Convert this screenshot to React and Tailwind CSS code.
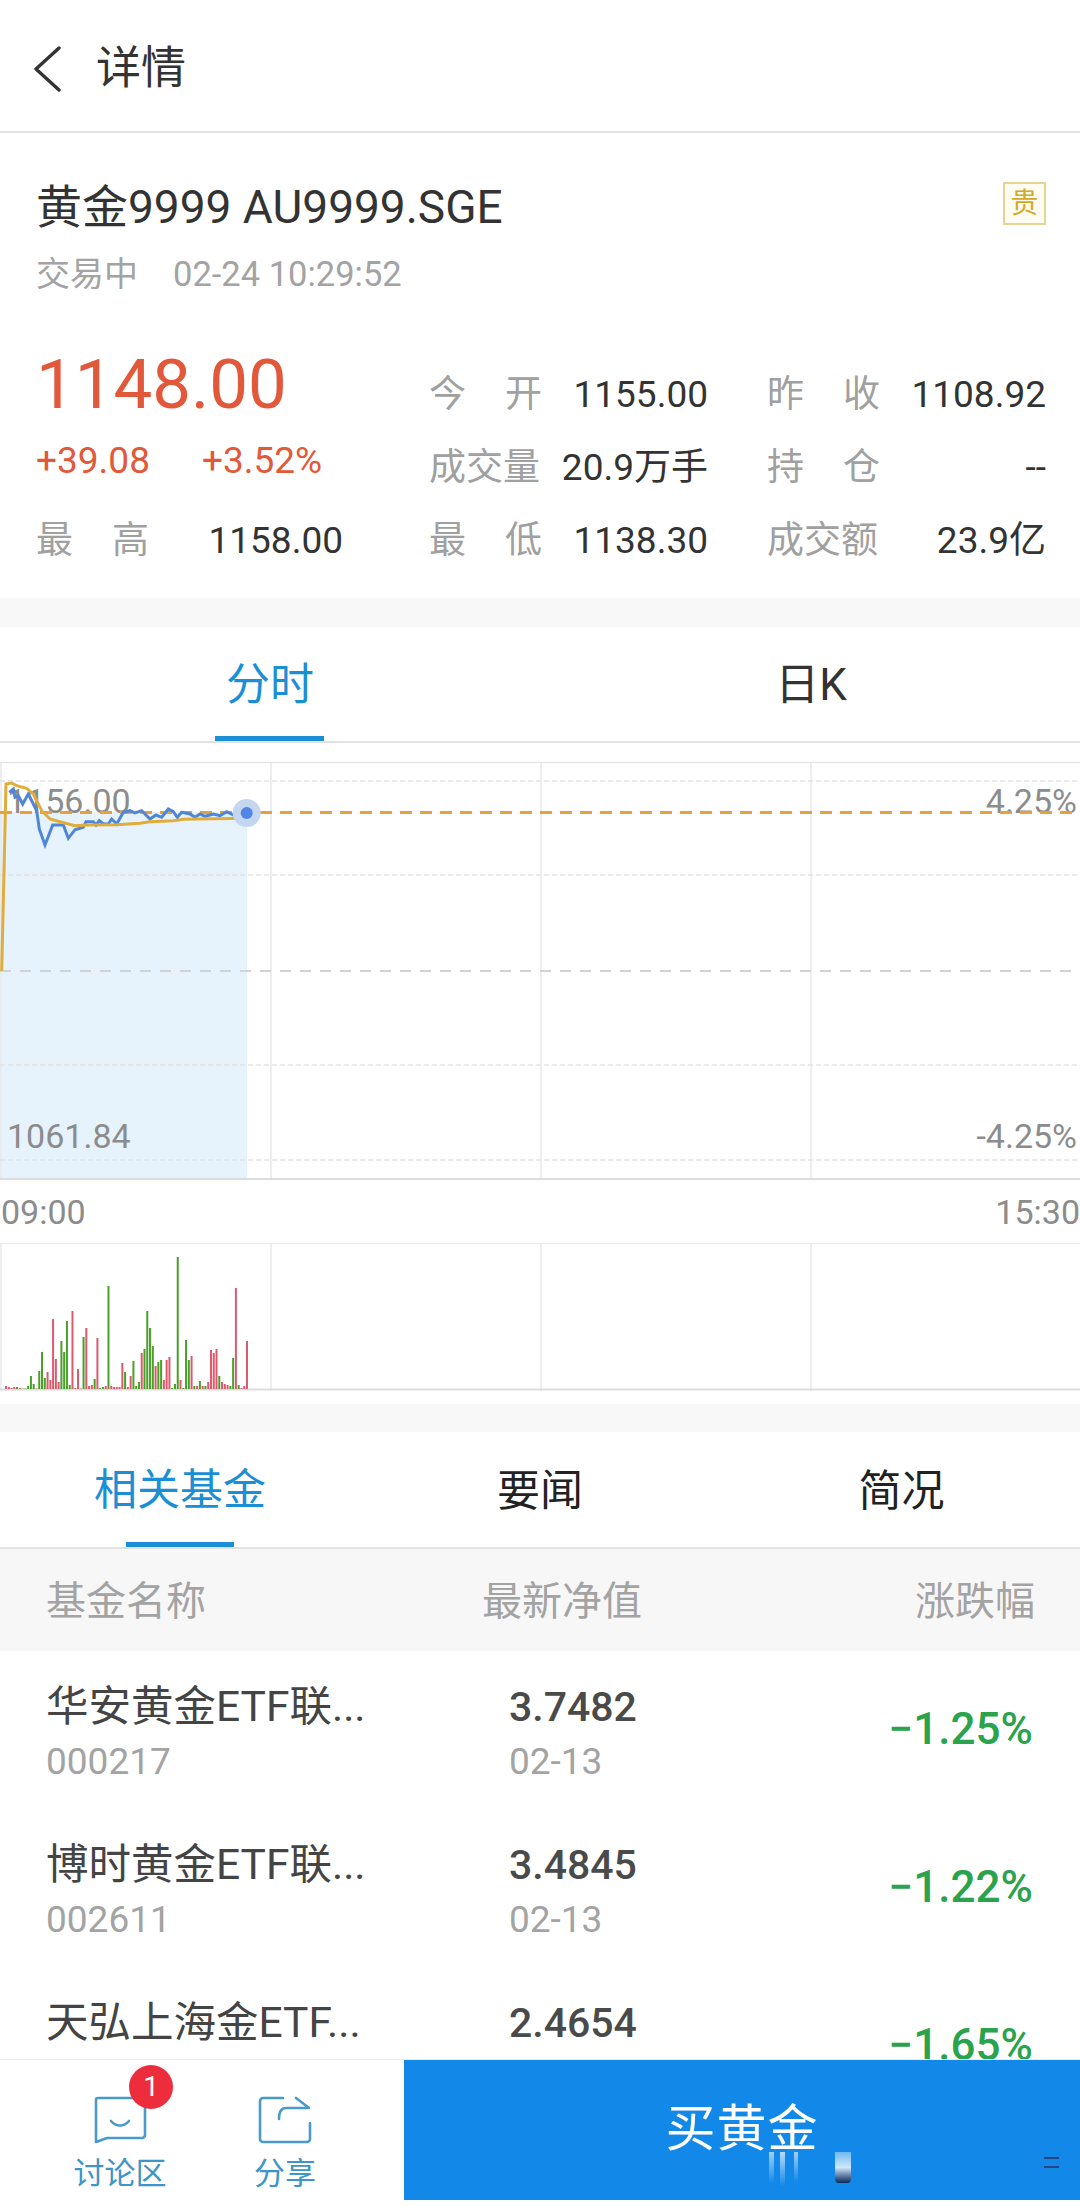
// [colour, height] for each volume bar, left to right
const volumes = [
  ['r', 3], ['r', 2], ['r', 1], ['r', 2], ['g', 2], ['r', 1], ['g', 0.5], ['g', 0.5], ['g', 3], ['g', 13], ['g', 5], ['r', 0.5],
  ['g', 18], ['g', 37], ['g', 11], ['r', 17], ['r', 9], ['r', 70], ['r', 30], ['r', 7], ['g', 48], ['g', 37], ['g', 68], ['g', 4],
  ['r', 78], ['r', 1], ['r', 20], ['r', 0.5], ['g', 52], ['r', 61], ['r', 3], ['r', 4], ['g', 10], ['r', 51], ['g', 1], ['g', 2],
  ['r', 3], ['g', 103], ['r', 3], ['r', 2], ['r', 2], ['r', 2], ['r', 26], ['g', 17], ['r', 2], ['r', 13], ['g', 28], ['g', 3],
  ['g', 7], ['r', 36], ['g', 40], ['g', 78], ['g', 61], ['g', 43], ['r', 23], ['g', 27], ['g', 29], ['r', 9], ['r', 29], ['r', 32],
  ['g', 1], ['g', 5], ['g', 132], ['r', 9], ['g', 1], ['g', 49], ['g', 29], ['r', 33], ['g', 3], ['r', 3], ['g', 8], ['r', 3],
  ['g', 3], ['r', 7], ['r', 39], ['r', 36], ['r', 40], ['g', 13], ['r', 7], ['r', 5], ['r', 4], ['g', 3], ['g', 31], ['r', 101],
  ['g', 4], ['r', 1], ['r', 3], ['r', 48],
];

const priceLine = [[28,160],[40,150],[45,175],[55,170],[68,195],[85,165],[100,195],[110,215],[118,270],[135,318],[158,258],[190,258],[205,298],[225,272],[250,265],[258,248],[280,248],[288,258],[298,245],[310,255],[325,255],[335,240],[350,255],[370,220],[390,215],[405,222],[425,215],[450,240],[468,228],[485,235],[505,210],[520,218],[532,235],[545,220],[570,225],[585,235],[600,225],[615,232],[640,225],[660,230],[680,218],[700,228],[720,225],[740,222]];
const avgLine = [[5,695],[12,400],[18,135],[35,132],[50,140],[80,148],[100,165],[125,215],[150,240],[180,248],[225,260],[260,258],[350,257],[420,253],[450,248],[520,245],[550,241],[740,238]];
const toPoints = (pts) => pts.map(([x, y]) => `${(x / 3).toFixed(1)},${(740 + y / 3).toFixed(1)}`).join(' ');

const funds = [
  { name: '华安黄金ETF联...', code: '000217', value: '3.7482', date: '02-13', pct: '−1.25%' },
  { name: '博时黄金ETF联...', code: '002611', value: '3.4845', date: '02-13', pct: '−1.22%' },
  { name: '天弘上海金ETF...', code: '', value: '2.4654', date: '', pct: '−1.65%' },
];

function Label({ a, b }) {
  return (
    <span className="flex w-[113px] justify-between text-[37px] leading-[44px] text-[#a0a0a0]">
      <span>{a}</span>
      <span>{b}</span>
    </span>
  );
}

function Stat({ label, value }) {
  return (
    <div className="flex items-center justify-between">
      {label.length === 3 ? <span className="text-[37px] leading-[44px] text-[#a0a0a0]">{label}</span> : <Label a={label[0]} b={label[1]} />}
      <span className="text-[37px] leading-[44px] text-[#333]">{value}</span>
    </div>
  );
}

function GridLines() {
  return (
    <>
      <line x1="271" x2="271" y1="0" y2="2000" stroke="#e8e8e8" strokeWidth="1.5" />
      <line x1="541" x2="541" y1="0" y2="2000" stroke="#e8e8e8" strokeWidth="1.5" />
      <line x1="811" x2="811" y1="0" y2="2000" stroke="#e8e8e8" strokeWidth="1.5" />
      <line x1="1" x2="1" y1="0" y2="2000" stroke="#e8e8e8" strokeWidth="1.5" />
    </>
  );
}

export default function App() {
  return (
    <div className="flex h-[2206px] w-[1080px] flex-col overflow-hidden bg-white font-['Roboto','Noto_Sans_CJK_SC',sans-serif]">
      <div className="min-h-0 flex-1 overflow-hidden">
        {/* Header */}
        <div className="flex h-[133px] items-center border-b-2 border-[#e2e2e2] pl-[33px] pt-[6px]">
          <svg width="28" height="46" viewBox="0 0 28 46" fill="none" stroke="#333" strokeWidth="3.4" strokeLinecap="round" strokeLinejoin="round">
            <path d="M26 2L3 23l23 21" />
          </svg>
          <span className="ml-[35px] text-[45px] leading-none text-[#333]">详情</span>
        </div>

        {/* Quote */}
        <div className="h-[465px] pl-[36px] pr-[34px]">
          <div className="flex items-start justify-between pt-[49px]">
            <span className="text-[46px] leading-[50px] text-[#333]">黄金9999 AU9999.SGE</span>
            <span className="flex h-[43px] w-[43px] items-center justify-center border-2 border-[#e5d592] bg-[#fffdf2] text-[28px] leading-none text-[#d4a92a]">贵</span>
          </div>
          <div className="mt-[22px] flex text-[35px] leading-[40px] text-[#a3a3a3]">
            <span className="text-[34px]">交易中</span>
            <span className="ml-[35px] text-[34.5px]">02-24 10:29:52</span>
          </div>
          <div className="mt-[56px] flex">
            <div className="w-[394px]">
              <div className="text-[69px] leading-[70px] text-[#e2583a]">1148.00</div>
              <div className="mt-[21px] flex text-[37px] leading-[40px] text-[#e2583a]">
                <span>+39.08</span>
                <span className="ml-[52px]">+3.52%</span>
              </div>
              <div className="mt-[38px] flex w-[307px] items-center justify-between">
                <Label a="最" b="高" />
                <span className="text-[37px] leading-[40px] text-[#333]">1158.00</span>
              </div>
            </div>
            <div className="grid flex-1 grid-cols-[279px_279px] gap-x-[59px] gap-y-[28px] pt-[22px]">
              <Stat label="今开" value="1155.00" />
              <Stat label="昨收" value="1108.92" />
              <Stat label="成交量" value="20.9万手" />
              <Stat label="持仓" value="--" />
              <Stat label="最低" value="1138.30" />
              <Stat label="成交额" value="23.9亿" />
            </div>
          </div>
        </div>
        <div className="h-[29px] bg-[#f8f8f8]" />

        {/* Chart tabs */}
        <div className="flex h-[116px] border-b-2 border-[#e2e2e2]">
          <div className="flex flex-1 flex-col items-center">
            <div className="flex flex-1 items-center pl-[2px] pt-[7px] text-[44px] text-[#1a8fd5]">分时</div>
            <div className="h-[5px] w-[109px] bg-[#1a8fd5]" />
          </div>
          <div className="flex flex-1 items-center justify-center pl-[4px] pt-[2px] text-[44px] text-[#333]">日K</div>
        </div>

        {/* Intraday chart */}
        <div className="relative mt-[19px] h-[418px]">
          <svg className="absolute inset-0 block" width="1080" height="418" viewBox="0 763 1080 418">
            <rect x="0" y="813" width="247" height="367" fill="#e6f3fd" />
            <GridLines />
            <line x1="0" x2="1080" y1="763" y2="763" stroke="#e2e2e2" strokeWidth="2" />
            <line x1="0" x2="1080" y1="1180" y2="1180" stroke="#dcdcdc" strokeWidth="2" />
            <line x1="0" x2="1080" y1="782" y2="782" stroke="#e4e4e4" strokeWidth="1.5" strokeDasharray="5 3" />
            <line x1="0" x2="1080" y1="876" y2="876" stroke="#e4e4e4" strokeWidth="1.5" strokeDasharray="5 3" />
            <line x1="0" x2="1080" y1="972" y2="972" stroke="#d2d2d2" strokeWidth="2" strokeDasharray="11 9" />
            <line x1="0" x2="1080" y1="1066" y2="1066" stroke="#e4e4e4" strokeWidth="1.5" strokeDasharray="5 3" />
            <line x1="0" x2="1080" y1="1161" y2="1161" stroke="#dfe3e6" strokeWidth="1.5" strokeDasharray="5 3" />
          </svg>
          <span className="absolute left-[7px] top-[19px] text-[34px] leading-[40px] text-[#8c8c8c]">1156.00</span>
          <span className="absolute right-[3px] top-[19px] text-[34px] leading-[40px] text-[#8c8c8c]">4.25%</span>
          <span className="absolute left-[7px] top-[354px] text-[34px] leading-[40px] text-[#8c8c8c]">1061.84</span>
          <span className="absolute right-[3px] top-[354px] text-[34px] leading-[40px] text-[#8c8c8c]">-4.25%</span>
          <svg className="absolute inset-0 block" width="1080" height="418" viewBox="0 763 1080 418">
            <line x1="0" x2="1080" y1="813.5" y2="813.5" stroke="#e6a03c" strokeWidth="3" strokeDasharray="12 8" />
            <polyline points={toPoints(priceLine)} fill="none" stroke="#4f86d8" strokeWidth="3" />
            <polyline points={toPoints(avgLine)} fill="none" stroke="#e0ad3a" strokeWidth="3" />
            <circle cx="246.7" cy="814" r="14" fill="#c5d6f1" />
            <circle cx="246.7" cy="814" r="6" fill="#4f86e8" />
          </svg>
        </div>

        <div className="flex h-[63px] items-center justify-between pl-[1px] pt-[2px] text-[34px] text-[#8c8c8c]">
          <span>09:00</span>
          <span>15:30</span>
        </div>

        {/* Volume */}
        <svg className="block" width="1080" height="148" viewBox="0 1244 1080 148">
          <GridLines />
          <line x1="0" x2="1080" y1="1244.5" y2="1244.5" stroke="#ececec" strokeWidth="1.5" />
          <line x1="0" x2="1080" y1="1390.5" y2="1390.5" stroke="#dcdcdc" strokeWidth="2" />
          {volumes.map(([c, h], i) => (
            <rect key={i} x={5 + i * 2.77} y={1390 - h} width="2" height={h} fill={c === 'r' ? '#dd5a6e' : '#4a9f2a'} />
          ))}
        </svg>
        <div className="mt-[13px] h-[28px] bg-[#f8f8f8]" />

        {/* Info tabs */}
        <div className="grid h-[117px] grid-cols-3 border-b-2 border-[#e2e2e2]">
          <div className="flex flex-col items-center">
            <div className="flex flex-1 items-center whitespace-nowrap pt-[6px] text-[43px] text-[#1a8fd5]">相关基金</div>
            <div className="h-[5px] w-[108px] bg-[#1a8fd5]" />
          </div>
          <div className="flex items-center justify-center pt-[4px] text-[43px] text-[#222]">要闻</div>
          <div className="flex items-center justify-center pl-[3px] pt-[4px] text-[43px] text-[#222]">简况</div>
        </div>

        {/* Funds table */}
        <div className="flex h-[102px] items-center bg-[#f7f7f7] pl-[46px] pr-[45px] pt-[4px] text-[40px] text-[#a3a3a3]">
          <span className="w-[436px]">基金名称</span>
          <span className="flex-1">最新净值</span>
          <span>涨跌幅</span>
        </div>
        {funds.map((f) => (
          <div key={f.value} className="flex h-[158px] pl-[46px] pr-[47px] pt-[32px]">
            <div className="w-[463px]">
              <div className="text-[42.5px] leading-[48px] text-[#444]">{f.name}</div>
              {f.code && <div className="mt-[9px] text-[37px] leading-[44px] text-[#a3a3a3]">{f.code}</div>}
            </div>
            <div className="flex-1">
              <div className="text-[41px] font-medium leading-[48px] text-[#4a4a4a]">{f.value}</div>
              {f.date && <div className="mt-[9px] text-[37px] leading-[44px] text-[#a3a3a3]">{f.date}</div>}
            </div>
            <div className="pt-[21px] text-[44px] font-medium leading-[50px] text-[#2ba24c]">{f.pct}</div>
          </div>
        ))}
      </div>

      {/* Bottom bar */}
      <div className="flex h-[147px] shrink-0 items-start border-t border-[#eeeeee] bg-white">
        <div className="flex w-[404px] pl-[50px]">
          <div className="flex w-[140px] flex-col items-center pt-[36px]">
            <div className="relative">
              <svg className="block" width="54" height="48" viewBox="0 0 54 48" fill="none" stroke="#4a9acb" strokeWidth="2.6" strokeLinejoin="round">
                <path d="M5 2h44a3 3 0 0 1 3 3v34a3 3 0 0 1-3 3H14L3 46V4a2 2 0 0 1 2-2z" />
                <path d="M18 25c5 6 13 6 18 0" strokeLinecap="round" />
              </svg>
              <span className="absolute right-[-26px] top-[-31px] flex h-[44px] w-[44px] items-center justify-center rounded-full bg-[#ee2d3c] text-[28px] leading-none text-white">1</span>
            </div>
            <span className="mt-[10px] text-[31px] leading-[40px] text-[#3f94c8]">讨论区</span>
          </div>
          <div className="flex w-[190px] flex-col items-center pt-[36px]">
            <svg className="block" width="54" height="48" viewBox="0 0 54 48" fill="none" stroke="#4a9acb" strokeWidth="2.6" strokeLinecap="round" strokeLinejoin="round">
              <path d="M25 2H5a3 3 0 0 0-3 3v38a3 3 0 0 0 3 3h44a3 3 0 0 0 3-3V27" />
              <path d="M38 2l13 10H28c-5 0-7 4-7 11" />
            </svg>
            <span className="mt-[10px] text-[31px] leading-[40px] text-[#3f94c8]">分享</span>
          </div>
        </div>
        <div className="relative flex h-[140px] flex-1 items-center justify-center bg-[#1289e8] pb-[2px] text-[50px] tracking-[1px] text-white">
          买黄金
          {/* blurred watermark smears over the button */}
          <div className="absolute left-[365px] top-[92px] h-[32px] w-[5px] bg-gradient-to-b from-white/60 to-white/0" />
          <div className="absolute left-[376px] top-[92px] h-[34px] w-[5px] bg-gradient-to-b from-white/70 to-white/0" />
          <div className="absolute left-[390px] top-[92px] h-[30px] w-[4px] bg-gradient-to-b from-white/60 to-white/0" />
          <div className="absolute left-[431px] top-[92px] h-[31px] w-[16px] rounded-b-[4px] bg-gradient-to-b from-white/40 via-white/80 to-[#0b2a5a]" />
          <div className="absolute left-[640px] top-[97px] h-[2px] w-[15px] bg-[#23467e]" />
          <div className="absolute left-[640px] top-[106px] h-[2px] w-[15px] bg-[#23467e]" />
        </div>
      </div>
    </div>
  );
}
